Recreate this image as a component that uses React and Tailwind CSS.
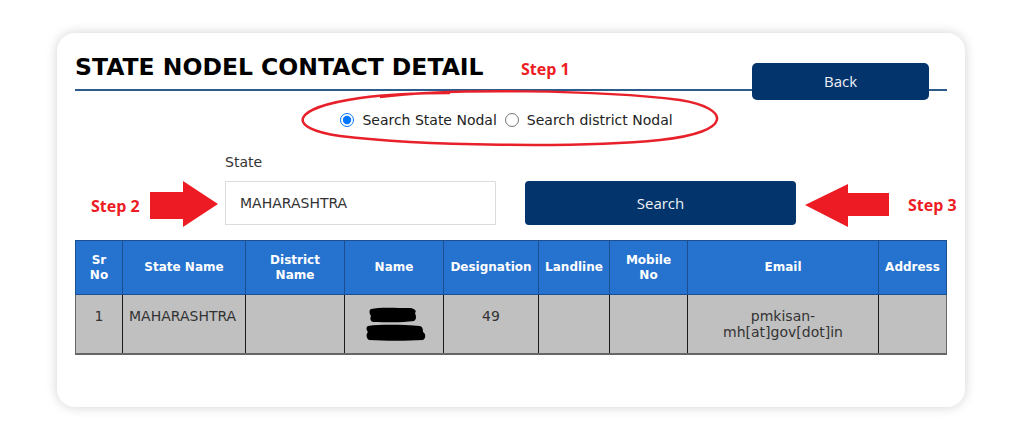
import React from 'react';

const columns = [
  { label: ['Sr', 'No'], width: 'w-[47px]' },
  { label: ['State Name'], width: 'w-[123px]' },
  { label: ['District', 'Name'], width: 'w-[99px]' },
  { label: ['Name'], width: 'w-[99px]' },
  { label: ['Designation'], width: 'w-[95px]' },
  { label: ['Landline'], width: 'w-[71px]' },
  { label: ['Mobile', 'No'], width: 'w-[78px]' },
  { label: ['Email'], width: 'w-[191px]' },
  { label: ['Address'], width: 'w-[68px]' },
];

const verdana = 'font-["DejaVu_Sans","Liberation_Sans",sans-serif]';
const openSans = 'font-["Open_Sans","Noto_Sans",sans-serif]';

function ArrowRight() {
  return (
    <svg width="68" height="48" viewBox="0 0 68 48" className="-my-[2px] shrink-0">
      <polygon points="0,13 33,13 33,2 68,25 33,48 33,40 0,40" fill="#ed1c24" />
    </svg>
  );
}

function ArrowLeft() {
  return (
    <svg width="84" height="48" viewBox="0 0 84 48" className="-my-[2px] shrink-0">
      <polygon points="0,26 43,5 43,14 84,14 84,37 43,37 43,48" fill="#ed1c24" />
    </svg>
  );
}

// scribbled-out name
function Redacted() {
  return (
    <svg width="62" height="34" viewBox="0 0 62 34" className="block ml-[20px]">
      <path
        d="M 6 2 C 14 0, 30 1, 46 1 C 50 2, 52 4, 50 6 C 51 9, 52 12, 49 14 C 36 16, 20 15, 8 15 C 5 14, 5 11, 6 9 C 4 6, 4 3, 6 2 Z"
        fill="#000"
      />
      <path
        d="M 3 19 C 18 17, 40 18, 55 19 C 58 20, 58 23, 58 25 C 61 27, 61 31, 58 33 C 42 34, 20 34, 4 33 C 1 31, 1 27, 3 25 C 1 23, 1 20, 3 19 Z"
        fill="#000"
      />
    </svg>
  );
}

const cell = 'align-top pt-[13px] pb-[12px] border-x border-[#1a1a1a] bg-[#c0c0c0]';

export default function App() {
  return (
    <div className="w-[1024px] h-[435px] overflow-hidden bg-white pt-[33px]">
      <div className="relative ml-[57px] w-[908px] h-[374px] rounded-[18px] bg-white shadow-[0_0_12px_rgba(0,0,0,0.18)] px-[18px]">
        {/* header */}
        <div className="flex items-end h-[58px] border-b-2 border-[#2c5b8c]">
          <div className={`w-[446px] shrink-0 mb-[10px] text-[23.5px] leading-[24px] font-bold text-black whitespace-nowrap ${verdana}`}>
            STATE NODEL CONTACT DETAIL
          </div>
          <div className={`mb-[12px] text-[16px] leading-[16px] font-bold text-[#ed1c24] ${openSans}`}>Step 1</div>
          <button className={`ml-auto mr-[18px] -mb-[11px] w-[177px] h-[37px] shrink-0 rounded-[5px] bg-[#04346c] text-[15px] text-[#eef2f7] ${openSans}`}>
            Back
          </button>
        </div>

        {/* radio options */}
        <div className={`mt-[19px] flex justify-center items-center h-[20px] pr-[9px] text-[14px] text-[#222] whitespace-nowrap ${verdana}`}>
          <input type="radio" name="mode" defaultChecked className="m-0 w-[14px] h-[14px]" />
          <span className="ml-[8px]">Search State Nodal</span>
          <input type="radio" name="mode" className="m-0 ml-[8px] w-[14px] h-[14px]" />
          <span className="ml-[8px]">Search district Nodal</span>
        </div>

        <div className={`mt-[22px] pl-[150px] text-[14px] leading-[20px] text-[#333] ${verdana}`}>State</div>

        {/* search row */}
        <div className="mt-[9px] flex items-center h-[44px] whitespace-nowrap">
          <div className={`w-[75px] shrink-0 pl-[16px] pt-[6px] text-[16px] font-bold text-[#ed1c24] ${openSans}`}>Step 2</div>
          <ArrowRight />
          <input
            readOnly
            value="MAHARASHTRA"
            className={`ml-[7px] shrink-0 w-[271px] h-[44px] border border-[#dcdcdc] bg-white pl-[14px] text-[14px] text-[#333] outline-none ${verdana}`}
          />
          <button className={`ml-[29px] shrink-0 w-[271px] h-[44px] rounded-[4px] bg-[#04346c] text-[15px] text-[#eef2f7] ${openSans}`}>
            Search
          </button>
          <div className="ml-[9px] shrink-0">
            <ArrowLeft />
          </div>
          <div className={`ml-[19px] shrink-0 pt-[4px] text-[16px] font-bold text-[#ed1c24] ${openSans}`}>Step 3</div>
        </div>

        {/* result table */}
        <table className={`mt-[15px] w-[871px] table-fixed border-collapse ${verdana}`}>
          <colgroup>
            {columns.map((c, i) => (
              <col key={i} className={c.width} />
            ))}
          </colgroup>
          <thead>
            <tr>
              {columns.map((c, i) => (
                <th
                  key={i}
                  className="h-[54px] p-0 border border-[#1b4f8f] bg-[#2672cf] text-center align-middle text-[12px] leading-[15px] font-bold text-white"
                >
                  {c.label.map((l, j) => (
                    <div key={j}>{l}</div>
                  ))}
                </th>
              ))}
            </tr>
          </thead>
          <tbody>
            <tr className="text-[14px] leading-[16px] text-[#333] border-b-2 border-[#666]">
              <td className={`${cell} border-l-[#666] text-center`}>1</td>
              <td className={`${cell} pl-[6px] whitespace-nowrap`}>MAHARASHTRA</td>
              <td className={cell}></td>
              <td className={cell}>
                <div className="-mt-[1px]">
                  <Redacted />
                </div>
              </td>
              <td className={`${cell} text-center`}>49</td>
              <td className={cell}></td>
              <td className={cell}></td>
              <td className={`${cell} text-center`}>
                pmkisan-
                <br />
                mh[at]gov[dot]in
              </td>
              <td className={`${cell} border-r-[#666]`}></td>
            </tr>
          </tbody>
        </table>

        {/* hand-drawn highlight around the radio options */}
        <svg className="pointer-events-none absolute inset-0" width="908" height="374" viewBox="57 33 908 374">
          <path
            d="M 380 97 C 450 88, 600 90, 680 100 C 730 108, 735 132, 660 140 C 580 148, 420 146, 340 136 C 285 128, 290 108, 360 98 C 390 94, 420 93, 450 93"
            fill="none"
            stroke="#e8202a"
            strokeWidth="2.5"
          />
        </svg>
      </div>
    </div>
  );
}
